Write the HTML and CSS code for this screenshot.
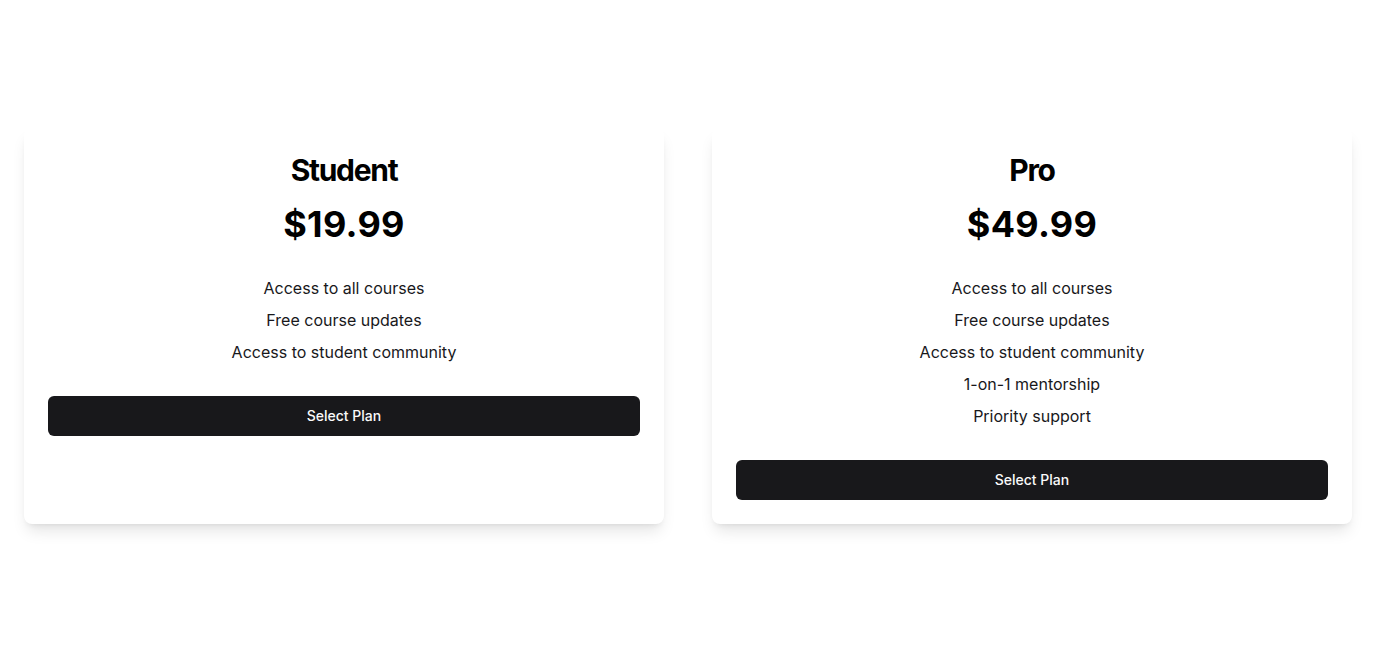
FILE: index.html
```html
<!DOCTYPE html>
<html>
<head>
<meta charset="utf-8">
<link rel="stylesheet" href="styles.css">
</head>
<body>
<main class="page">
  <div class="grid">
    <section class="card">
      <h2 class="title">Student</h2>
      <div class="price">$19.99</div>
      <ul class="features">
        <li>Access to all courses</li>
        <li>Free course updates</li>
        <li>Access to student community</li>
      </ul>
      <button class="btn">Select Plan</button>
    </section>
    <section class="card">
      <h2 class="title">Pro</h2>
      <div class="price">$49.99</div>
      <ul class="features">
        <li>Access to all courses</li>
        <li>Free course updates</li>
        <li>Access to student community</li>
        <li>1-on-1 mentorship</li>
        <li>Priority support</li>
      </ul>
      <button class="btn">Select Plan</button>
    </section>
  </div>
</main>
</body>
</html>
```
FILE: styles.css
```css
* { box-sizing: border-box; }
html, body { margin: 0; padding: 0; background: #fff; }
body { font-family: Inter, "Noto Sans", sans-serif; color: #000; }
.page {
  min-height: 652px;
  display: flex;
  align-items: center;
  padding: 0 24px;
}
.grid {
  width: 100%;
  display: grid;
  grid-template-columns: 1fr 1fr;
  gap: 48px;
}
.card {
  background: #fff;
  border-radius: 8px;
  box-shadow: 0 10px 15px -3px rgba(0,0,0,0.1), 0 4px 6px -4px rgba(0,0,0,0.1);
  padding: 24px;
  display: flex;
  flex-direction: column;
  align-items: stretch;
  text-align: center;
}
.title {
  margin: 0 0 16px;
  font-size: 30px;
  line-height: 36px;
  font-weight: 700;
  letter-spacing: -1.3px;
}
.price {
  margin: 0 0 32px;
  font-size: 36px;
  line-height: 40px;
  font-weight: 700;
  letter-spacing: 0.3px;
}
.features {
  list-style: none;
  margin: 0 0 32px;
  padding: 0;
  display: flex;
  flex-direction: column;
  gap: 8px;
  font-size: 16px;
  line-height: 24px;
  color: #18181b;
}
.btn {
  height: 40px;
  border: none;
  border-radius: 6px;
  background: #18181b;
  color: #fafafa;
  font-family: inherit;
  font-size: 14px;
  line-height: 20px;
  padding: 0 16px 1px;
  font-weight: 500;
  cursor: pointer;
}
```
